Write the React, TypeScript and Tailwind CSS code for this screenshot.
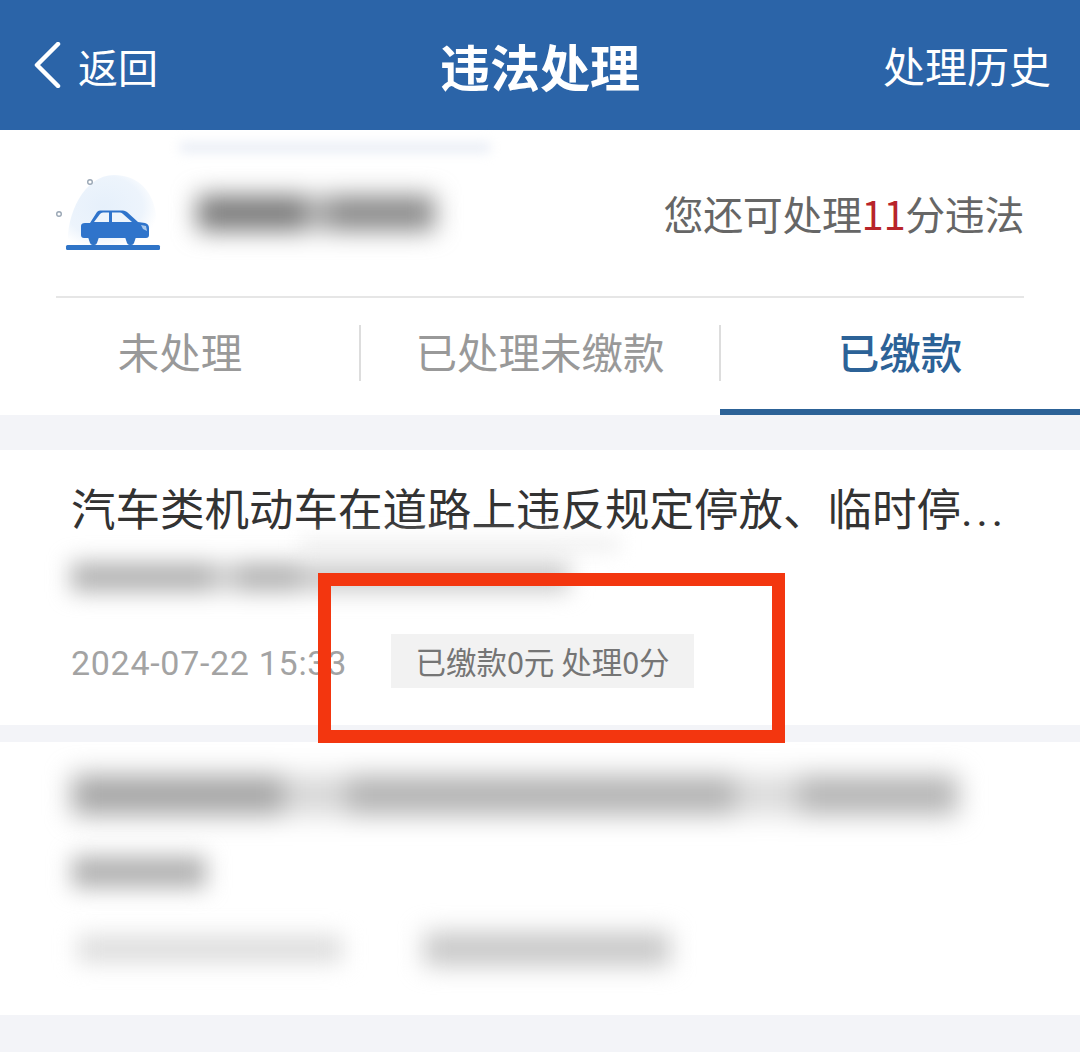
import React from 'react';

const cjk = "font-['Noto_Sans_CJK_SC','Noto_Sans',sans-serif]";

const tabs = [
  { label: '未处理', active: false },
  { label: '已处理未缴款', active: false },
  { label: '已缴款', active: true },
];

function CarIcon() {
  return (
    <svg className="w-[116px] h-[86px] shrink-0" viewBox="50 170 116 86" fill="none">
      <defs>
        <radialGradient id="halo" cx="0.4" cy="0.45" r="0.62">
          <stop offset="0" stopColor="#e6f0fb" />
          <stop offset="0.7" stopColor="#edf4fc" />
          <stop offset="1" stopColor="#ffffff" />
        </radialGradient>
      </defs>
      <path d="M68 245c-2-30 16-70 46-70 22 0 37 14 41 34 3 14 3 26 1 36z" fill="url(#halo)" />
      <circle cx="90" cy="182" r="2.3" stroke="#9aa7b5" strokeWidth="1.4" />
      <circle cx="59" cy="214" r="2.3" stroke="#9aa7b5" strokeWidth="1.4" />
      <rect x="66" y="245" width="94" height="5" rx="1.5" fill="#2f74c7" />
      <path d="M88 237h11l-2 6a3 3 0 0 1-3 2h-1a3 3 0 0 1-3-2zM125 237h11l-2 6a3 3 0 0 1-3 2h-1a3 3 0 0 1-3-2z" fill="#2f74c7" />
      <path
        d="M85 223h5l7-11q1-1.500 3-1.500h23q2 0 4 1.500l11 10 7 1q4 1 4 5v7q0 3-3 3H84q-3 0-3-3v-9q0-3 4-3z"
        fill="#2f74cb"
      />
      <path d="M94 222l6-8q1-1.500 3-1.500h6V222zM112 212.500h8q2 0 3 1.500l9 8h-20z" fill="#eef5fc" />
      <path d="M141 225l5 1 1 5-4-2z" fill="#a9c8ec" />
    </svg>
  );
}

export default function App() {
  return (
    <div className={`relative w-[1080px] h-[1052px] overflow-hidden bg-[#f3f4f8] ${cjk}`}>
      {/* Header */}
      <header className="h-[130px] bg-[#2b64a8] text-white grid grid-cols-3 items-center">
        <div className="flex items-center pl-[33px] gap-[17px]">
          <svg className="w-[28px] h-[46px]" viewBox="0 0 28 46" fill="none">
            <path d="M25 2L4 23l21 21" stroke="#fff" strokeWidth="4.5" strokeLinecap="round" strokeLinejoin="round" />
          </svg>
          <span className="text-[40px] leading-none pt-[2px]">返回</span>
        </div>
        <div className="text-center text-[50px] leading-none font-bold">违法处理</div>
        <div className="text-right pr-[29px] text-[42px] leading-none">处理历史</div>
      </header>

      {/* Vehicle + tabs */}
      <section className="relative bg-white h-[285px]">
        <div className="absolute left-[180px] top-[13px] w-[310px] h-[9px] bg-[#e6ebf4] blur-[6px]" />
        <div className="h-[166px] flex items-center pl-[50px] pr-[56px]">
          <CarIcon />
          <div className="ml-[31px] flex h-[36px] blur-[12px]">
            <div className="w-[108px] bg-[#7c7c7c]" />
            <div className="w-[24px] bg-[#b4b4b4]" />
            <div className="w-[106px] bg-[#8c8c8c]" />
          </div>
          <div className="ml-auto text-[40px] leading-none tracking-[-0.4px] text-[#666666] whitespace-nowrap">
            您还可处理<span className="text-[#b8242a]">11</span>分违法
          </div>
        </div>
        <div className="mx-[56px] h-[2px] bg-[#e6e6e6]" />
        <div className="grid grid-cols-3 h-[117px]">
          {tabs.map((tab, i) => (
            <div
              key={tab.label}
              className={`relative flex items-center justify-center text-[41.500px] leading-none ${
                tab.active
                  ? 'pb-[4px] text-[#2c6297] font-medium border-b-[6px] border-[#2c6297]'
                  : 'pb-[10px] text-[#999999]'
              }`}
            >
              {tab.label}
              {i > 0 && <span className="absolute left-[-1px] top-[27px] h-[56px] w-[2px] bg-[#dddddd]" />}
            </div>
          ))}
        </div>
      </section>

      {/* First record */}
      <section className="relative mt-[35px] bg-white h-[275px] pt-[27px] pl-[71px]">
        <div className="h-[60px] text-[44.500px] leading-[60px] text-[#333333] whitespace-nowrap">
          汽车类机动车在道路上违反规定停放、临时停
          <span className="font-['Roboto',sans-serif] tracking-[3.500px]">...</span>
        </div>
        <div className="absolute left-[300px] top-[88px] w-[320px] h-[14px] bg-[#f0f0f0] blur-[9px]" />
        <div className="mt-[25px] flex w-[498px] h-[30px] blur-[11px]">
          <div className="w-[140px] bg-[#b4b4b4]" />
          <div className="w-[28px] bg-[#d0d0d0]" />
          <div className="w-[60px] bg-[#b6b6b6]" />
          <div className="w-[270px] bg-[#cccccc]" />
        </div>
        <div className="mt-[42px] flex items-center">
          <span className="w-[320px] pt-[4px] font-['Roboto',sans-serif] text-[34px] leading-none tracking-[0.7px] text-[#a3a3a3] whitespace-nowrap">
            2024-07-22 15:33
          </span>
          <span className="h-[54px] w-[303px] flex items-center justify-center bg-[#f2f2f2] text-[30.500px] leading-none text-[#757575] whitespace-nowrap">
            已缴款0元 处理0分
          </span>
        </div>
      </section>

      {/* Second record, blurred out */}
      <section className="mt-[17px] bg-white h-[273px] pt-[33px] pl-[72px]">
        <div className="flex w-[886px] h-[40px] blur-[13px]">
          <div className="w-[211px] bg-[#a6a6a6]" />
          <div className="w-[64px] bg-[#d8d8d8]" />
          <div className="w-[388px] bg-[#b4b4b4]" />
          <div className="w-[64px] bg-[#dcdcdc]" />
          <div className="w-[159px] bg-[#b6b6b6]" />
        </div>
        <div className="mt-[41px] w-[134px] h-[32px] bg-[#b2b2b2] blur-[11px]" />
        <div className="mt-[44px] flex items-center">
          <div className="ml-[6px] w-[264px] h-[28px] bg-[#dedede] blur-[11px]" />
          <div className="ml-[82px] w-[246px] h-[34px] bg-[#c8c8c8] blur-[12px]" />
        </div>
      </section>

      {/* Red annotation box */}
      <div className="absolute left-[318px] top-[573px] w-[467px] h-[170px] border-[13px] border-[#f3360f]" />
    </div>
  );
}
